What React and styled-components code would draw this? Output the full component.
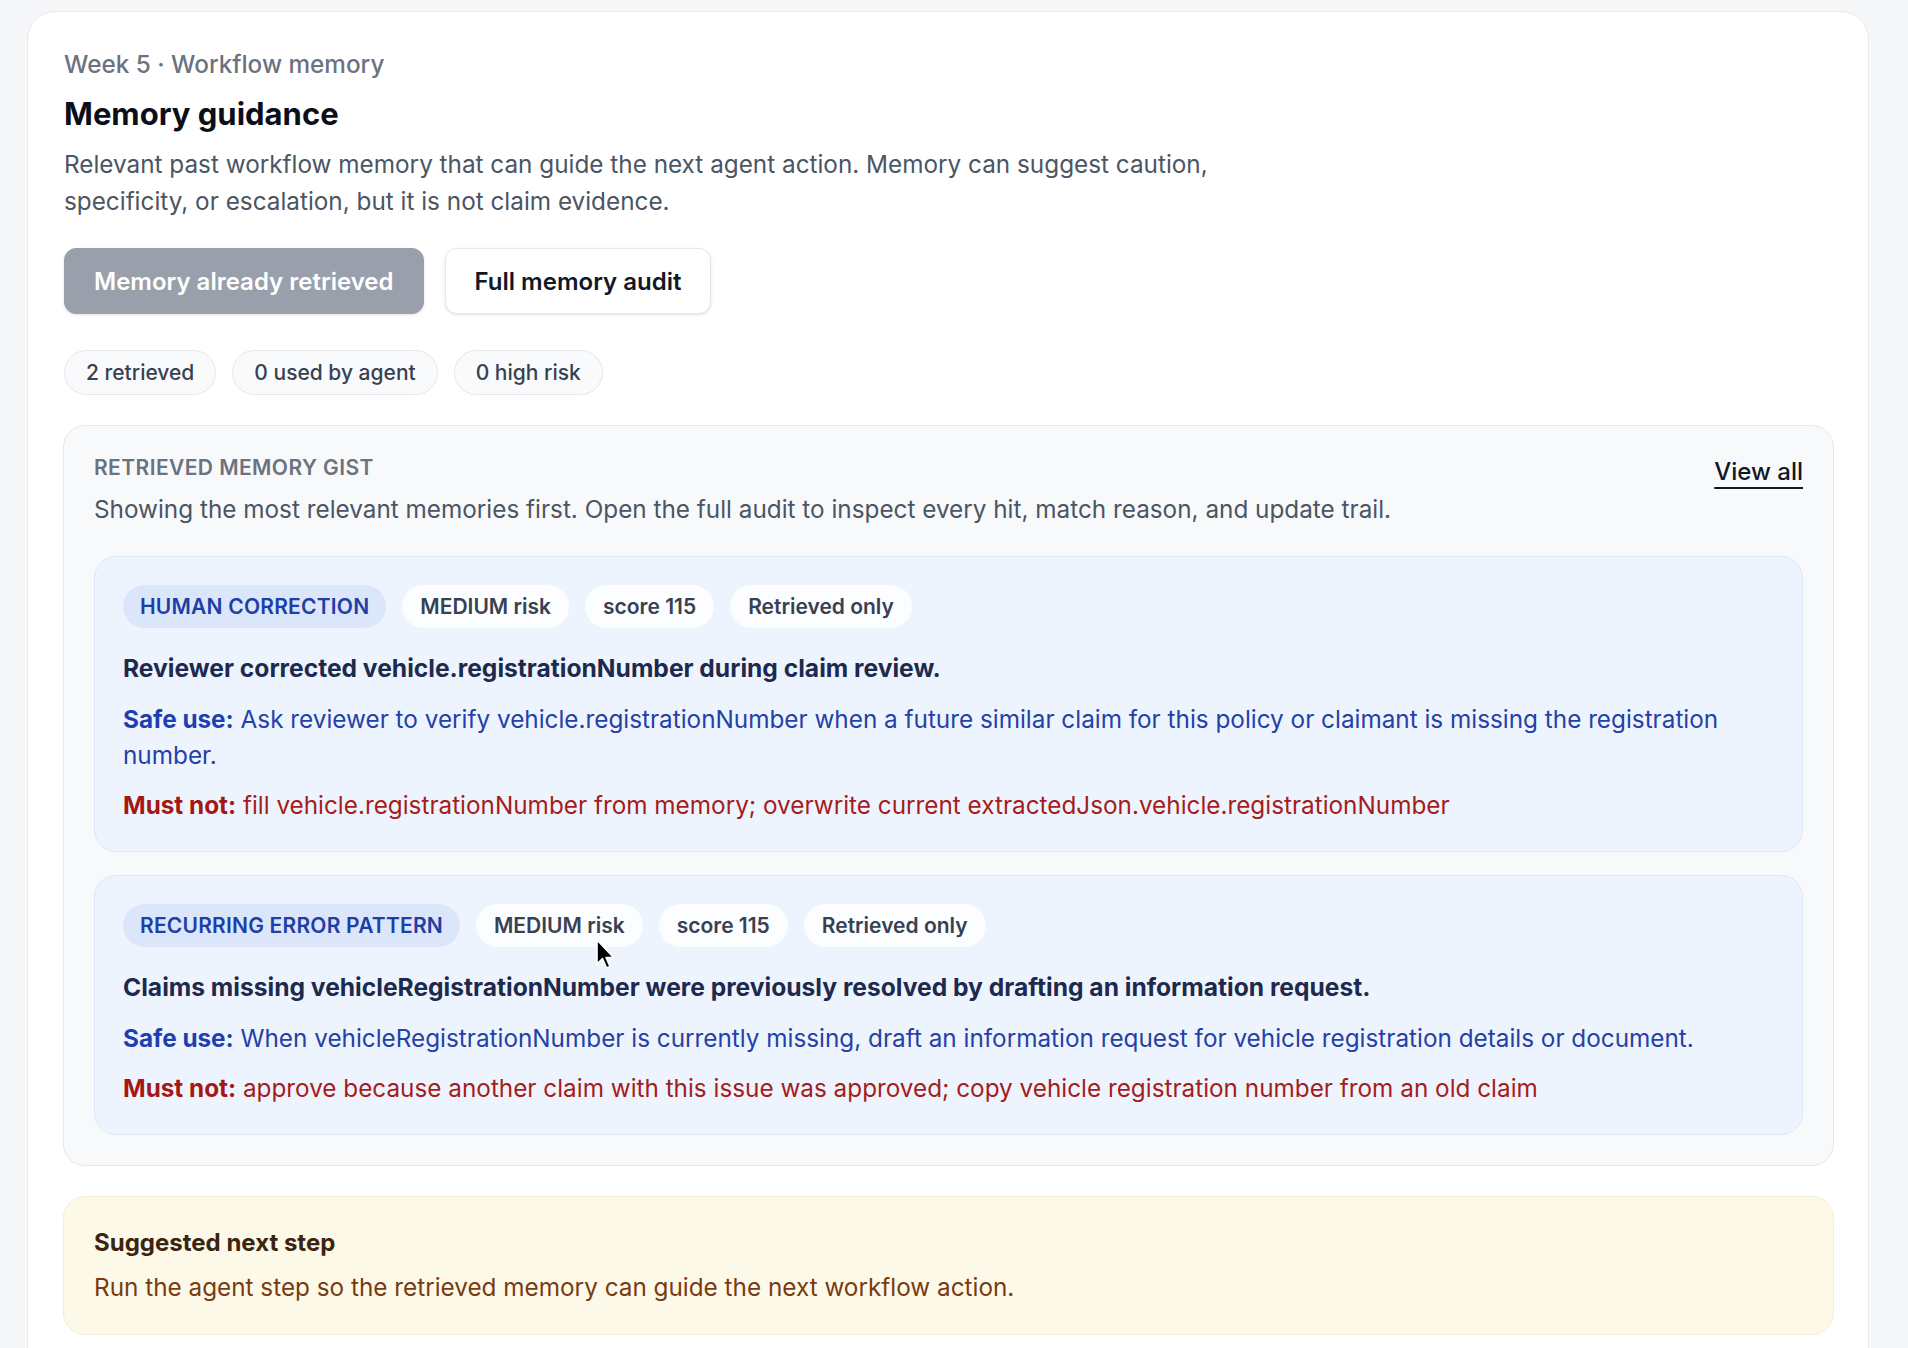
import React from 'react';
import styled, { createGlobalStyle } from 'styled-components';

const GlobalStyle = createGlobalStyle`
  html, body {
    margin: 0;
    padding: 0;
    background: #f6f7f9;
  }
  body {
    font-family: Inter, "Noto Sans", "Liberation Sans", sans-serif;
    -webkit-font-smoothing: antialiased;
  }
  * {
    box-sizing: border-box;
  }
`;

const Page = styled.div`
  padding: 11px 39px 0 27px;
  min-height: 1348px;
`;

const Card = styled.section`
  position: relative;
  background: #ffffff;
  border: 1px solid #e7e9ed;
  border-radius: 28px;
  padding: 36px 35px 60px 36px;
`;

const Eyebrow = styled.div`
  font-size: 24.3px;
  line-height: 32px;
  font-weight: 500;
  color: #6b7280;
`;

const Title = styled.h2`
  margin: 15px 0 0;
  font-size: 31px;
  line-height: 38px;
  font-weight: 700;
  color: #0b0f19;
`;

const Lead = styled.p`
  margin: 13px 0 0;
  max-width: 1180px;
  font-size: 24.3px;
  line-height: 36.5px;
  color: #4b5563;
`;

const Actions = styled.div`
  display: flex;
  gap: 21px;
  margin-top: 29px;
`;

const Button = styled.button`
  height: 66px;
  padding: 0 29px;
  border-radius: 12px;
  font-family: inherit;
  font-size: 24px;
  font-weight: 600;
  cursor: pointer;
  border: 1px solid ${({ $primary }) => ($primary ? '#9aa0ab' : '#e5e7eb')};
  background: ${({ $primary }) => ($primary ? '#9aa0ab' : '#ffffff')};
  color: ${({ $primary }) => ($primary ? '#ffffff' : '#111827')};
  box-shadow: 0 1px 3px rgba(17, 24, 39, 0.12);
`;

const Stats = styled.div`
  display: flex;
  gap: 16px;
  margin-top: 36px;
`;

const Stat = styled.span`
  display: inline-flex;
  align-items: center;
  height: 45px;
  padding: 0 21px;
  border-radius: 999px;
  border: 1px solid #e5e7eb;
  background: #f9fafb;
  font-size: 21px;
  font-weight: 500;
  color: #374151;
`;

const Gist = styled.div`
  margin-top: 30px;
  margin-left: -1px;
  margin-right: -1px;
  background: #f8f9fb;
  border: 1px solid #e5e7eb;
  border-radius: 22px;
  padding: 28px 30px 30px;
`;

const GistHeader = styled.div`
  display: flex;
  justify-content: space-between;
  align-items: flex-start;
  gap: 24px;
`;

const Label = styled.div`
  font-size: 21px;
  line-height: 28px;
  font-weight: 600;
  letter-spacing: 0.02em;
  text-transform: uppercase;
  color: #6b7280;
`;

const Note = styled.p`
  margin: 9px 0 0;
  font-size: 24.3px;
  line-height: 36px;
  color: #4b5563;
`;

const ViewAll = styled.a`
  margin-top: 2px;
  font-size: 24px;
  line-height: 32px;
  font-weight: 500;
  color: #111827;
  text-decoration: underline;
  text-decoration-thickness: 2px;
  text-underline-offset: 7px;
  white-space: nowrap;
  cursor: pointer;
`;

const MemoryList = styled.div`
  display: flex;
  flex-direction: column;
  gap: 23px;
  margin-top: 29px;
`;

const Memory = styled.article`
  background: #eef4fd;
  border: 1px solid #dce7f8;
  border-radius: 22px;
  padding: 28px;
`;

const Tags = styled.div`
  display: flex;
  gap: 16px;
`;

const Tag = styled.span`
  display: inline-flex;
  align-items: center;
  height: 43px;
  padding: 0 ${({ $kind }) => ($kind ? '17px' : '18px')};
  border-radius: 999px;
  font-size: 21px;
  font-weight: 600;
  background: ${({ $kind }) => ($kind ? '#dbe6fa' : '#fbfdff')};
  color: ${({ $kind }) => ($kind ? '#1e3fa6' : '#374151')};
  letter-spacing: ${({ $kind }) => ($kind ? '0.01em' : '0')};
`;

const MemoryTitle = styled.h3`
  margin: 22px 0 0;
  font-size: 24.6px;
  line-height: 36px;
  font-weight: 700;
  color: #1d2a4d;
`;

const Rule = styled.p`
  margin: 14.5px 0 0;
  font-size: 24.3px;
  line-height: 36px;
  color: ${({ $tone }) => ($tone === 'safe' ? '#2441a8' : '#a51c1c')};

  strong {
    font-weight: 700;
    color: ${({ $tone }) => ($tone === 'safe' ? '#1e3fb0' : '#a51616')};
  }
`;

const NextStep = styled.div`
  margin-top: 30px;
  margin-left: -1px;
  margin-right: -1px;
  background: #fcf9e8;
  border: 1px solid #f3eed6;
  border-radius: 22px;
  padding: 30px;
`;

const NextTitle = styled.div`
  font-size: 24px;
  line-height: 32px;
  font-weight: 700;
  color: #3b2410;
`;

const NextText = styled.p`
  margin: 11px 0 0;
  font-size: 24.3px;
  line-height: 34px;
  color: #7a3b12;
`;

const Pointer = styled.svg`
  position: absolute;
  left: 567px;
  top: 927px;
  width: 22px;
  height: 32px;
  pointer-events: none;
`;

const memories = [
  {
    kind: 'Human correction',
    title: 'Reviewer corrected vehicle.registrationNumber during claim review.',
    safe:
      'Ask reviewer to verify vehicle.registrationNumber when a future similar claim for this policy or claimant is missing the registration number.',
    mustNot:
      'fill vehicle.registrationNumber from memory; overwrite current extractedJson.vehicle.registrationNumber',
  },
  {
    kind: 'Recurring error pattern',
    title:
      'Claims missing vehicleRegistrationNumber were previously resolved by drafting an information request.',
    safe:
      'When vehicleRegistrationNumber is currently missing, draft an information request for vehicle registration details or document.',
    mustNot:
      'approve because another claim with this issue was approved; copy vehicle registration number from an old claim',
  },
];

export default function App() {
  return (
    <Page>
      <GlobalStyle />
      <Card>
        <Eyebrow>Week 5 · Workflow memory</Eyebrow>
        <Title>Memory guidance</Title>
        <Lead>
          Relevant past workflow memory that can guide the next agent action. Memory can
          suggest caution, specificity, or escalation, but it is not claim evidence.
        </Lead>

        <Actions>
          <Button $primary>Memory already retrieved</Button>
          <Button>Full memory audit</Button>
        </Actions>

        <Stats>
          <Stat>2 retrieved</Stat>
          <Stat>0 used by agent</Stat>
          <Stat>0 high risk</Stat>
        </Stats>

        <Gist>
          <GistHeader>
            <div>
              <Label>Retrieved memory gist</Label>
              <Note>
                Showing the most relevant memories first. Open the full audit to inspect every
                hit, match reason, and update trail.
              </Note>
            </div>
            <ViewAll>View all</ViewAll>
          </GistHeader>

          <MemoryList>
            {memories.map((m) => (
              <Memory key={m.kind}>
                <Tags>
                  <Tag $kind>{m.kind.toUpperCase()}</Tag>
                  <Tag>MEDIUM risk</Tag>
                  <Tag>score 115</Tag>
                  <Tag>Retrieved only</Tag>
                </Tags>
                <MemoryTitle>{m.title}</MemoryTitle>
                <Rule $tone="safe">
                  <strong>Safe use:</strong> {m.safe}
                </Rule>
                <Rule $tone="danger">
                  <strong>Must not:</strong> {m.mustNot}
                </Rule>
              </Memory>
            ))}
          </MemoryList>
        </Gist>

        <NextStep>
          <NextTitle>Suggested next step</NextTitle>
          <NextText>
            Run the agent step so the retrieved memory can guide the next workflow action.
          </NextText>
        </NextStep>

        <Pointer viewBox="0 0 22 32">
          <path
            d="M2 1 L2 25 L7.5 19.5 L11.5 29 L15 27.5 L11 18.5 L18.5 18.5 Z"
            fill="#000"
            stroke="#fff"
            strokeWidth="1.6"
            strokeLinejoin="round"
          />
        </Pointer>
      </Card>
    </Page>
  );
}
